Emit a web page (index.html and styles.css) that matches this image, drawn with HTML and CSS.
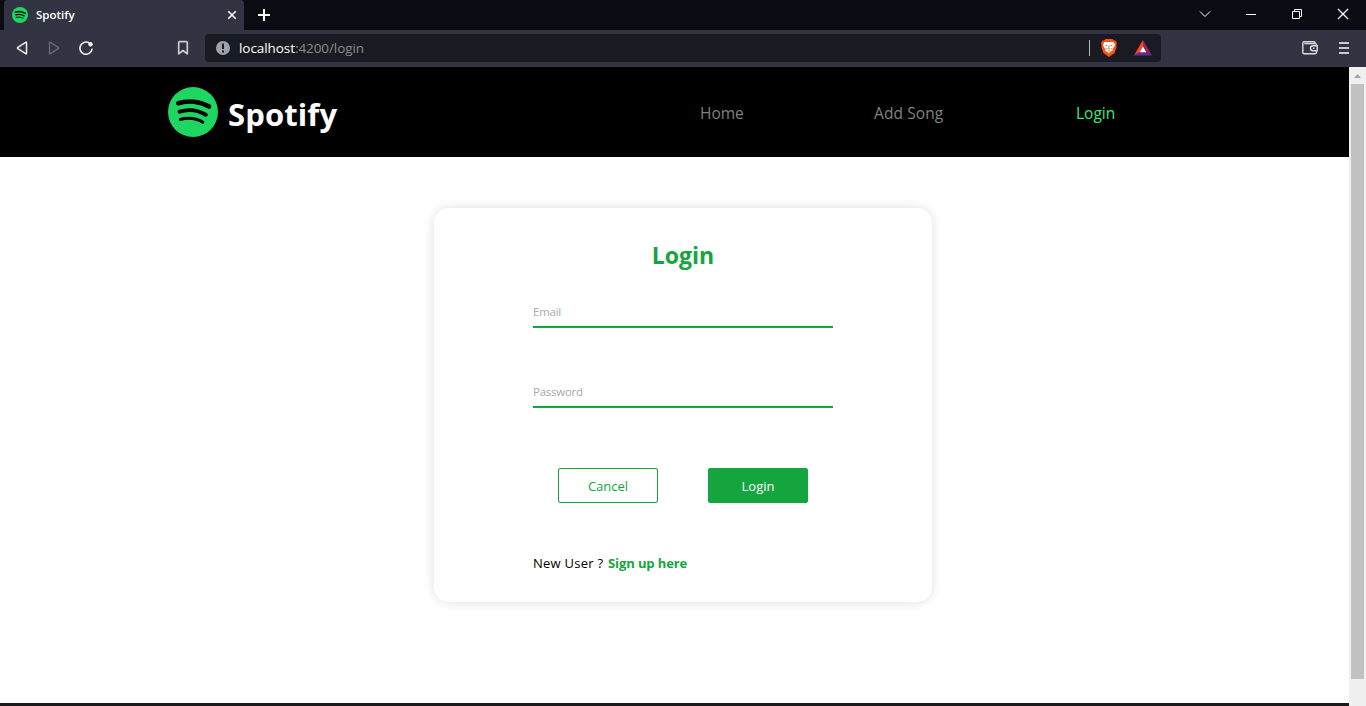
FILE: index.html
```html
<!DOCTYPE html>
<html lang="en">
<head>
<meta charset="utf-8">
<title>Spotify</title>
<link rel="stylesheet" href="styles.css">
</head>
<body>
<svg width="0" height="0" class="defs">
  <symbol id="logo" viewBox="0 0 50 50">
    <circle cx="25" cy="25" r="25" fill="#1ed760"/>
    <path d="M10.3 16.2C20 13.2 32 14.3 41 19.6" stroke-width="4.6"/>
    <path d="M11.5 24.7C20 22 30 23.2 37.8 27.7" stroke-width="3.9"/>
    <path d="M12.4 32.5C20 30.4 28 31.2 34.8 35.2" stroke-width="3.1"/>
  </symbol>
</svg>
<div class="tabbar">
  <div class="tab">
    <svg class="favicon" width="16" height="16"><use href="#logo"/></svg>
    <span class="tab-title">Spotify</span>
    <svg class="tab-close" width="10" height="10" viewBox="0 0 10 10"><path d="M1.3 1.3l7.4 7.4M8.7 1.3L1.3 8.7" stroke="#fff" stroke-width="1.6"/></svg>
  </div>
  <svg class="new-tab" width="12" height="12" viewBox="0 0 12 12"><path d="M6 0v12M0 6h12" stroke="#fff" stroke-width="2"/></svg>
  <div class="window-controls">
    <svg width="46" height="30" viewBox="0 0 46 30"><path d="M18 11.5l5 5 5-5"/></svg>
    <svg width="46" height="30" viewBox="0 0 46 30"><path d="M18 14.5h10"/></svg>
    <svg width="46" height="30" viewBox="0 0 46 30"><path d="M18.500 11.500h7v7h-7zM20.500 11.500v-2h7v7h-2"/></svg>
    <svg width="46" height="30" viewBox="0 0 46 30"><path d="M18 9l10 10M28 9L18 19" stroke-width="1.3"/></svg>
  </div>
</div>
<div class="toolbar">
  <svg class="tools" width="205" height="37" viewBox="0 0 205 37">
    <path d="M26.500 12.800v10.400q0 1-.9.500l-7.700-5q-.9-.7 0-1.400l7.700-5q.9-.5.900.5z" stroke="#eee" stroke-width="1.5"/>
    <path d="M49.500 12.800v10.400q0 1 .9.500l7.700-5q.9-.7 0-1.400l-7.700-5q-.9-.5-.9.500z" stroke="#676976" stroke-width="1.400"/>
    <path d="M89.600 13.200A6.100 6.100 0 1 0 92 19.300" stroke="#eee" stroke-width="1.6"/>
    <circle cx="90.500" cy="14.300" r="2.200" fill="#eee"/>
    <path d="M178.700 12.600q0-.9.900-.9h6.800q.9 0 .9.900v11.200l-4.300-3.300-4.300 3.300z" stroke="#ccc" stroke-width="1.700"/>
  </svg>
  <div class="address">
    <svg width="14" height="14" viewBox="0 0 14 14"><circle cx="7" cy="7" r="7" fill="#9fa1a9"/><path d="M7 2.500v5.500M7 9.500v2" stroke="#191b22" stroke-width="2"/></svg>
    <span class="url">localhost<span class="url-path">:4200/login</span></span>
    <span class="address-divider"></span>
    <svg class="shield" width="16" height="18" viewBox="0 0 16 18">
      <path d="M4.500 0h7l1.500 1.500h1.500L16 4l-.6 2 .2 2-2 6L8 18l-5.600-4L.4 8l.2-2L0 4l1.500-2.500H3z" fill="#fb5218"/>
      <path d="M3.500 3l3 .3L8 3l1.500.3 3-.3 1.500 2.400-.7 2-1.800 2.500.3 1.700-2.200 1L8 14.300l-1.600-1.400-2.200-1 .3-1.700-1.800-2.500-.7-2z" fill="#fff"/>
      <path d="M4.300 5.700l2.400.7-1 1.100zM11.700 5.700l-2.400.7 1 1.100zM5 8.800l1.300 1-.8 1zM11 8.800l-1.300 1 .8 1zM7.500 6.500h1L8.400 9l.6.800-1 .8-1-.8.600-.8zM6.500 11.700l1.500-.4 1.500.4-1.500.8z" fill="#fb5218"/>
    </svg>
    <svg width="18" height="16" viewBox="0 0 18 16">
      <path d="M9 0L0 15.500l6-3.500 3-5.500z" fill="#ff4724"/>
      <path d="M9 0l9 15.500-6-3.500-3-5.500z" fill="#9e1f63"/>
      <path d="M0 15.500h18L12 12H6z" fill="#662d91"/>
      <path d="M9 6.500L5.700 12.300h6.600z" fill="#fff"/>
    </svg>
  </div>
  <svg class="wallet" width="16" height="14" viewBox="0 0 16 14"><path d="M14.500 4.500V3.800q0-1.200-1.200-1.200H2.300M13 2.500V2q0-1.200-1.200-1.200H2.300Q.8.800.8 2.300v8.900q0 1.500 1.500 1.500h10.800q1.400 0 1.400-1.400V9.900M15.200 4.800h-4.200a2.500 2.500 0 0 0 0 5h4.200zM11 7.300h1.500"/></svg>
  <svg class="menu" width="10" height="12" viewBox="0 0 10 12"><path d="M0 1h10M0 6h10M0 11h10"/></svg>
</div>
<div class="viewport">
  <div class="page">
    <header class="site-header">
      <svg width="50" height="50"><use href="#logo"/></svg>
      <h1 class="brand">Spotify</h1>
      <nav class="nav">
        <a class="nav-home">Home</a>
        <a class="nav-add">Add Song</a>
        <a class="nav-login">Login</a>
      </nav>
    </header>
    <main class="content">
      <form class="card">
        <h2 class="title">Login</h2>
        <label class="field"><span>Email</span></label>
        <label class="field"><span>Password</span></label>
        <div class="actions">
          <button type="button" class="btn btn-outline"><span>Cancel</span></button>
          <button type="button" class="btn btn-solid"><span>Login</span></button>
        </div>
        <p class="signup"><span class="question">New User ?</span><a class="signup-link">Sign up here</a></p>
      </form>
    </main>
    <footer class="footer"></footer>
  </div>
  <div class="scrollbar">
    <svg width="17" height="17" viewBox="0 0 17 17"><path d="M5 11l3.500-4 3.500 4z" fill="#a3a3a3"/></svg>
    <div class="thumb"></div>
  </div>
</div>
</body>
</html>
```

FILE: styles.css
```css
* { box-sizing: border-box; }

body {
  margin: 0;
  height: 706px;
  overflow: hidden;
  display: flex;
  flex-direction: column;
  background: #fff;
  font-family: "Open Sans", "Noto Sans", sans-serif;
}

svg { display: block; flex: none; }
.defs { position: absolute; }
#logo path { fill: none; stroke: #000; stroke-linecap: round; }

.tabbar {
  flex: none;
  display: flex;
  align-items: center;
  height: 30px;
  padding-left: 4px;
  background: #0b0b14;
}

.tab {
  display: flex;
  align-items: center;
  width: 240px;
  height: 30px;
  padding: 0 7px 0 8px;
  border-radius: 4px 4px 0 0;
  background: #323443;
  color: #fff;
}

.tab-title { margin: -2px 0 0 8px; font-size: 11.500px; font-weight: 600; }
.tab-close { margin-left: auto; }
.new-tab { margin-left: 14px; }
.window-controls { display: flex; margin-left: auto; fill: none; stroke: #fff; stroke-width: 1; }

.toolbar {
  flex: none;
  display: flex;
  align-items: center;
  height: 37px;
  background: #323443;
}

.tools { fill: none; stroke-linejoin: round; stroke-linecap: round; }

.address {
  display: flex;
  align-items: center;
  width: 956px;
  height: 28px;
  margin-top: -1px;
  padding: 0 9px 0 11px;
  border-radius: 4px;
  background: #191b22;
}

.url { margin-left: 9px; color: #fff; font-size: 13.500px; letter-spacing: -0.07px; }
.url-path { color: #898a90; }
.address-divider { width: 1px; height: 16px; margin-left: auto; background: #b5b6ba; }
.shield { margin: 0 17px 0 11px; }
.wallet { margin: -1px 0 0 141px; fill: none; stroke: #ddd; stroke-width: 1.400; }
.menu { margin: -1px 0 0 21px; stroke: #ccc; stroke-width: 2; }

.viewport { flex: 1; display: flex; min-height: 0; }
.page { width: 1349px; display: flex; flex-direction: column; }

.site-header {
  flex: none;
  display: flex;
  align-items: center;
  height: 90px;
  padding-left: 168px;
  background: #000;
}

.brand {
  width: 110px;
  margin: 4px 0 0 10px;
  color: #fff;
  font-size: 31px;
  line-height: 40px;
  letter-spacing: 0.1px;
  white-space: nowrap;
}

.nav {
  display: flex;
  margin: 1px 0 0 362px;
  color: #808080;
  font-size: 15.500px;
  line-height: 22px;
  white-space: nowrap;
}

.nav-home { width: 174px; }
.nav-add { width: 202px; letter-spacing: 0.1px; }
.nav-login { color: #3ee97b; }

.content { flex: 1; padding: 51px 0 0 434px; }

.card {
  width: 498px;
  height: 394px;
  padding: 31px 99px 0;
  border-radius: 15px;
  box-shadow: 0 0 12px rgba(0, 0, 0, 0.13);
}

.title {
  margin: 0;
  color: #14a53e;
  font-size: 23px;
  line-height: 32px;
  text-align: center;
}

.field {
  display: flex;
  align-items: center;
  height: 32px;
  margin-top: 25px;
  border-bottom: 2px solid #14a53e;
  color: #a9a9a9;
  font-size: 11.500px;
  letter-spacing: -0.25px;
}

.field + .field { margin-top: 48px; }

.actions { display: flex; justify-content: space-between; margin: 60px 25px 0; }

.btn {
  width: 100px;
  height: 35px;
  padding: 1px 0 0;
  border: 1px solid #14a53e;
  border-radius: 2px;
  font: 13px "Open Sans", "Noto Sans", sans-serif;
}

.btn-outline { background: #fff; color: #14a53e; }
.btn-solid { background: #14a53e; color: #fff; }

.signup { display: flex; margin: 50px 0 0; font-size: 13px; line-height: 20px; white-space: nowrap; }
.question { width: 75px; font-weight: 500; letter-spacing: 0.25px; }
.signup-link { color: #14a53e; font-weight: 700; letter-spacing: -0.1px; }

.footer { flex: none; height: 3px; background: #1a1a1d; }

.scrollbar { width: 17px; background: #f0f0f0; }
.thumb { width: 13px; height: 595px; margin-left: 2px; background: #c1c1c1; }
```
